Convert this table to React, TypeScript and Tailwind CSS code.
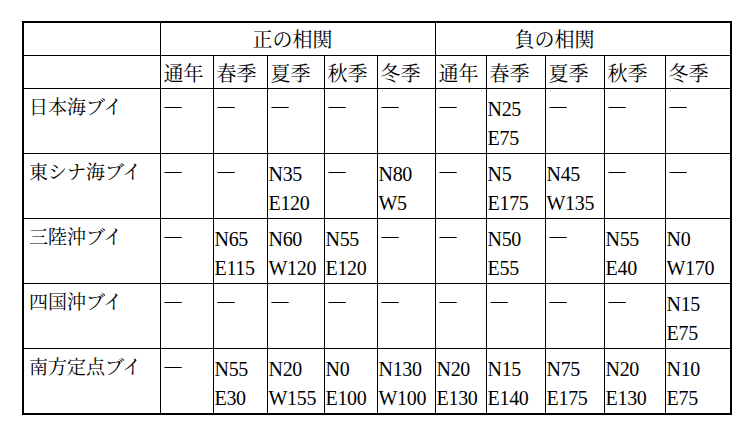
const seasons = ["通年", "春季", "夏季", "秋季", "冬季"];

const rows: { name: string; h: string; cells: string[] }[] = [
  { name: "日本海ブイ", h: "h-[64px]", cells: ["", "", "", "", "", "", "N25 E75", "", "", ""] },
  { name: "東シナ海ブイ", h: "h-[63px]", cells: ["", "", "N35 E120", "", "N80 W5", "", "N5 E175", "N45 W135", "", ""] },
  { name: "三陸沖ブイ", h: "h-[63px]", cells: ["", "N65 E115", "N60 W120", "N55 E120", "", "", "N50 E55", "", "N55 E40", "N0 W170"] },
  { name: "四国沖ブイ", h: "h-[64px]", cells: ["", "", "", "", "", "", "", "", "", "N15 E75"] },
  { name: "南方定点ブイ", h: "h-[64px]", cells: ["", "N55 E30", "N20 W155", "N0 E100", "N130 W100", "N20 E130", "N15 E140", "N75 E175", "N20 E130", "N10 E75"] },
];

const widths = [137, 53, 54, 57, 53, 58, 51, 59, 59, 61, 66];

function Cell({ value }: { value: string }) {
  if (!value) {
    return (
      <td className="border-[1.5px] border-black align-top pl-[4px] pt-[2px]">
        <span className="text-[17px] leading-[29px]">—</span>
      </td>
    );
  }
  const [a, b] = value.split(" ");
  return (
    <td className="border-[1.5px] border-black align-top pl-[1px] pt-[6px] text-[20px] leading-[29px] whitespace-nowrap tracking-[-0.3px]">
      {a}
      <br />
      {b}
    </td>
  );
}

export default function App() {
  return (
    <div className="w-[750px] h-[429px] bg-white text-black overflow-hidden pt-[21px] pl-[22px] font-[Liberation_Serif,Noto_Serif_CJK_JP,serif]">
      <table className="border-collapse table-fixed border-2 border-black w-[710px]">
        <colgroup>
          {widths.map((w, i) => (
            <col key={i} style={{ width: w }} />
          ))}
        </colgroup>
        <tbody>
          <tr className="h-[33px]">
            <td className="border-[1.5px] border-black"></td>
            <td colSpan={5} className="border-[1.5px] border-black align-top pt-[4px] pl-[92px] text-[20px] leading-[26px]">
              正の相関
            </td>
            <td colSpan={5} className="border-[1.5px] border-black align-top pt-[4px] pl-[79px] text-[20px] leading-[26px]">
              負の相関
            </td>
          </tr>
          <tr className="h-[33px]">
            <td className="border-[1.5px] border-black"></td>
            {[...seasons, ...seasons].map((s, i) => (
              <td key={i} className="border-[1.5px] border-black align-top pt-[5px] pl-[3px] text-[20px] leading-[26px] whitespace-nowrap">
                {s}
              </td>
            ))}
          </tr>
          {rows.map((r) => (
            <tr key={r.name} className={r.h}>
              <td className="border-[1.5px] border-black align-top pt-[6px] pl-[5px] text-[19px] leading-[26px] whitespace-nowrap">
                {r.name}
              </td>
              {r.cells.map((c, i) => (
                <Cell key={i} value={c} />
              ))}
            </tr>
          ))}
        </tbody>
      </table>
    </div>
  );
}
